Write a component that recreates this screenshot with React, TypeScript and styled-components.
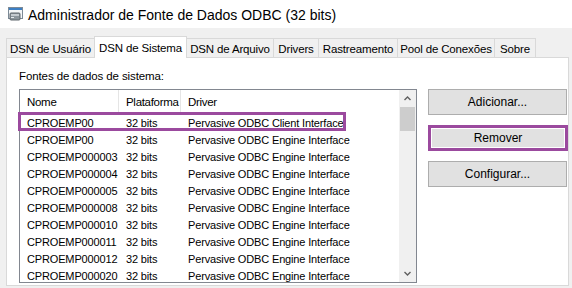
import styled, { createGlobalStyle } from "styled-components";

const GlobalStyle = createGlobalStyle`
    html, body {
        margin: 0;
        padding: 0;
        background: #f0f0f0;
    }
    body {
        font-family: "Liberation Sans", Arial, sans-serif;
        color: #000;
    }
`

const tabs = [
    { label: "DSN de Usuário", width: 89 },
    { label: "DSN de Sistema", width: 93, selected: true },
    { label: "DSN de Arquivo", width: 88 },
    { label: "Drivers", width: 46 },
    { label: "Rastreamento", width: 80 },
    { label: "Pool de Conexões", width: 98 },
    { label: "Sobre", width: 42 },
]

const sources = [
    { name: "CPROEMP00", driver: "Pervasive ODBC Client Interface", marked: true },
    { name: "CPROEMP00", driver: "Pervasive ODBC Engine Interface" },
    { name: "CPROEMP000003", driver: "Pervasive ODBC Engine Interface" },
    { name: "CPROEMP000004", driver: "Pervasive ODBC Engine Interface" },
    { name: "CPROEMP000005", driver: "Pervasive ODBC Engine Interface" },
    { name: "CPROEMP000008", driver: "Pervasive ODBC Engine Interface" },
    { name: "CPROEMP000010", driver: "Pervasive ODBC Engine Interface" },
    { name: "CPROEMP000011", driver: "Pervasive ODBC Engine Interface" },
    { name: "CPROEMP000012", driver: "Pervasive ODBC Engine Interface" },
    { name: "CPROEMP000020", driver: "Pervasive ODBC Engine Interface" },
]

function AppIcon() {
    return (
        <svg width="17" height="16" viewBox="0 0 17 16">
            <rect x="1.5" y="1.5" width="14" height="11" fill="#f4f6f8" stroke="#7d8a96" />
            <rect x="2" y="2" width="13" height="2" fill="#3c7fc4" />
            <rect x="3" y="7" width="10" height="7" rx="1" fill="#8c959c" stroke="#5f676d" />
            <rect x="4" y="8" width="8" height="2" fill="#c4cacf" />
            <rect x="4" y="11" width="3" height="1" fill="#e7ecef" />
        </svg>
    )
}

function Chevron({ up }: { up?: boolean }) {
    return (
        <svg width="7" height="5" viewBox="0 0 7 5">
            <path d={up ? "M0.5 4 L3.5 1 L6.5 4" : "M0.5 1 L3.5 4 L6.5 1"} fill="none" stroke="#606060" strokeWidth="1.4" />
        </svg>
    )
}

export default function App() {
    return (
        <Window>
            <GlobalStyle />
            <TitleBar>
                <AppIcon />
                <Title>Administrador de Fonte de Dados ODBC (32 bits)</Title>
            </TitleBar>
            <Body>
                <TabStrip>
                    {tabs.map(({ label, width, selected }) =>
                        <Tab key={label} $w={width} $selected={!!selected}>{label}</Tab>
                    )}
                </TabStrip>
                <Panel>
                    <Label>Fontes de dados de sistema:</Label>
                    <Content>
                        <ListBox>
                            <Table>
                                <HeaderRow>
                                    <HeaderCell $w={99}>Nome</HeaderCell>
                                    <HeaderCell $w={62}>Plataforma</HeaderCell>
                                    <HeaderCell>Driver</HeaderCell>
                                </HeaderRow>
                                {sources.map(({ name, driver, marked }, i) =>
                                    <Row key={i} $marked={!!marked}>
                                        <Cell $w={99}>{name}</Cell>
                                        <Cell $w={62}>32 bits</Cell>
                                        <Cell>{driver}</Cell>
                                    </Row>
                                )}
                            </Table>
                            <ScrollBar>
                                <Arrow><Chevron up /></Arrow>
                                <Track>
                                    <Thumb />
                                </Track>
                                <Arrow><Chevron /></Arrow>
                            </ScrollBar>
                        </ListBox>
                        <Buttons>
                            <Button>Adicionar...</Button>
                            <Button $marked>Remover</Button>
                            <Button>Configurar...</Button>
                        </Buttons>
                    </Content>
                </Panel>
            </Body>
        </Window>
    )
}

const Window = styled.div`
    width: 572px;
    height: 288px;
    overflow: hidden;
    display: flex;
    flex-direction: column;
    background: #f0f0f0;
`

const TitleBar = styled.div`
    height: 28px;
    background: #ffffff;
    display: flex;
    align-items: center;
    padding-left: 7px;
    gap: 4px;
    flex-shrink: 0;
`

const Title = styled.div`
    font-size: 14px;
    color: #000;
    padding-top: 1px;
`

const Body = styled.div`
    flex: 1;
    display: flex;
    flex-direction: column;
`

const TabStrip = styled.div`
    height: 29px;
    display: flex;
    align-items: flex-end;
    padding-left: 7px;
    flex-shrink: 0;
`

const Tab = styled.div<{ $w: number; $selected: boolean }>`
    width: ${p => p.$w}px;
    height: ${p => p.$selected ? 22 : 19}px;
    margin-left: -1px;
    margin-bottom: ${p => p.$selected ? -1 : 0}px;
    box-sizing: border-box;
    border: 1px solid #d9d9d9;
    border-bottom: none;
    background: ${p => p.$selected ? "#ffffff" : "#f0f0f0"};
    position: relative;
    z-index: ${p => p.$selected ? 1 : 0};
    font-size: 11.5px;
    letter-spacing: -0.15px;
    display: flex;
    align-items: center;
    justify-content: center;
    padding-top: ${p => p.$selected ? 0 : 1}px;
    white-space: nowrap;
`

const Panel = styled.div`
    width: 563px;
    height: 229px;
    margin-left: 6px;
    box-sizing: border-box;
    border: 1px solid #d9d9d9;
    background: #ffffff;
    padding: 11px 0 0 12px;
`

const Label = styled.div`
    font-size: 11.5px;
    letter-spacing: -0.1px;
    line-height: 14px;
    height: 14px;
    margin-bottom: 6px;
`

const Content = styled.div`
    display: flex;
    gap: 11px;
    align-items: flex-start;
`

const ListBox = styled.div`
    width: 398px;
    height: 194px;
    box-sizing: border-box;
    border: 1px solid #828790;
    display: flex;
`

const Table = styled.div`
    flex: 1;
    overflow: clip;
    overflow-clip-margin: 2px;
    font-size: 11px;
    letter-spacing: -0.15px;
`

const HeaderRow = styled.div`
    height: 24px;
    display: flex;
`

const HeaderCell = styled.div<{ $w?: number }>`
    ${p => p.$w ? `width: ${p.$w}px;` : "flex: 1;"}
    box-sizing: border-box;
    border-right: ${p => p.$w ? "1px solid #e5e5e5" : "none"};
    padding-left: 7px;
    display: flex;
    align-items: center;
    font-size: 11.5px;
    letter-spacing: -0.3px;
    white-space: nowrap;
    overflow: hidden;
`

const Row = styled.div<{ $marked: boolean }>`
    height: 17px;
    display: flex;
    align-items: center;
    position: relative;
    white-space: nowrap;

    &::after {
        content: "";
        display: ${p => p.$marked ? "block" : "none"};
        position: absolute;
        left: -2px;
        top: -2px;
        width: 328px;
        height: 19px;
        box-sizing: border-box;
        border: 3px solid #9b4a9e;
    }
`

const Cell = styled.div<{ $w?: number }>`
    ${p => p.$w ? `width: ${p.$w}px;` : "flex: 1;"}
    box-sizing: border-box;
    padding-left: 7px;
    padding-top: 1px;
`

const ScrollBar = styled.div`
    width: 17px;
    background: #f0f0f0;
    display: flex;
    flex-direction: column;
`

const Arrow = styled.div`
    height: 17px;
    display: flex;
    align-items: center;
    justify-content: center;
`

const Track = styled.div`
    flex: 1;
    display: flex;
    flex-direction: column;
`

const Thumb = styled.div`
    height: 24px;
    margin: 0 1px;
    background: #cdcdcd;
`

const Buttons = styled.div`
    width: 139px;
    display: flex;
    flex-direction: column;
    gap: 10px;
`

const Button = styled.button<{ $marked?: boolean }>`
    height: 26px;
    box-sizing: border-box;
    background: #e1e1e1;
    border: ${p => p.$marked ? "3px solid #9b4a9e" : "1px solid #adadad"};
    box-shadow: ${p => p.$marked ? "inset 0 0 0 1px #ffffff" : "none"};
    margin-right: ${p => p.$marked ? -1 : 0}px;
    font-family: "Liberation Sans", Arial, sans-serif;
    font-size: 12px;
    color: #000;
    padding: 0;
`
